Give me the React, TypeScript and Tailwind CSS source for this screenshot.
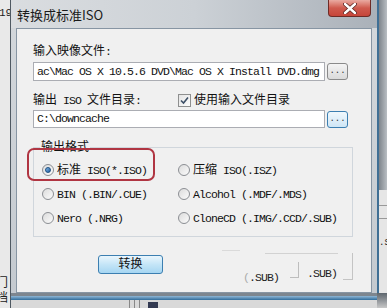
import React from 'react'

const mono = { fontFamily: '"Liberation Mono", "Noto Sans CJK SC", monospace' }

// splits a label into CJK runs and ASCII runs so each gets its own size
function Mixed({ text }: { text: string }) {
  const parts = text.split(/([\u4e00-\u9fff]+)/)
  return (
    <>
      {parts.map((p, i) =>
        /[\u4e00-\u9fff]/.test(p) ? (
          <span key={i} className="text-[12px] tracking-normal">{p}</span>
        ) : (
          <span key={i} className="text-[11.5px] tracking-[-0.9px]">{p}</span>
        )
      )}
    </>
  )
}

function Radio({ checked, label }: { checked?: boolean; label: string }) {
  return (
    <div className="flex h-[24px] items-center">
      <div className="flex h-[12px] w-[12px] items-center justify-center rounded-full border border-[#8b8e93] bg-gradient-to-br from-[#dcdcdc] to-[#fbfbfb]">
        {checked && (
          <div className="h-[6px] w-[6px] rounded-full border border-[#1d4f80] bg-gradient-to-br from-[#7fb6e8] to-[#1f5f9f]" />
        )}
      </div>
      <span className="ml-[3px] whitespace-nowrap text-[#111]">
        <Mixed text={label} />
      </span>
    </div>
  )
}

function DotsButton({ focused }: { focused?: boolean }) {
  return (
    <div
      className={
        focused
          ? 'ml-[2px] mt-[1px] flex h-[17px] w-[21px] items-center justify-center rounded-[3px] border border-[#3c7fb1] bg-gradient-to-b from-[#f0f8fd] to-[#cfe6f5] text-[9px] leading-none text-[#333]'
          : 'ml-[2px] mt-[1px] flex h-[17px] w-[21px] items-center justify-center rounded-[3px] border border-[#8a8a8a] bg-gradient-to-b from-[#f4f4f4] to-[#dadada] text-[9px] leading-none text-[#333]'
      }
    >
      ...
    </div>
  )
}

export default function App() {
  return (
    <div className="flex h-[308px] w-[387px] overflow-hidden bg-[#e4e4e4]" style={mono}>
      {/* desktop sliver on the left */}
      <div className="flex w-[10px] flex-col justify-between overflow-hidden bg-[#e9e9e9] text-[12px] leading-none text-[#222]">
        <div className="mt-[8px] -ml-[1px] text-[11px]">19</div>
        <div className="mb-[4px] flex flex-col" style={{ fontFamily: '"Noto Sans CJK SC", sans-serif' }}>
          <span className="-ml-[4px] h-[15px] leading-[15px]">门</span>
          <span className="-ml-[4px] h-[15px] leading-[15px]">档</span>
        </div>
      </div>

      {/* the dialog window */}
      <div className="flex w-[367px] flex-col border-l border-[#4f5962] bg-gradient-to-b from-[#d4d8dc] to-[#c3c9cf]">
        <div className="flex h-[28px] bg-gradient-to-r from-[#dadde0] via-[#ccd1d6] to-[#aab1b9]">
          <div
            className="ml-[6px] mt-[6px] text-[13px] leading-[18px] text-[#1a1a1a]"
            style={{ fontFamily: '"Noto Sans CJK SC", sans-serif' }}
          >
            转换成标准ISO
          </div>
          <div className="ml-auto mr-[6px] flex h-[17px] w-[43px] items-center justify-center rounded-b-[4px] border border-t-0 border-[#6e2b26] bg-gradient-to-b from-[#e9aaa2] via-[#cf5a4e] to-[#c6453a]">
            <svg width="14" height="11" viewBox="0 0 14 11">
              <path d="M2 1 L12 10 M12 1 L2 10" stroke="#5a2420" strokeWidth="4" strokeLinecap="round" />
              <path d="M2 1 L12 10 M12 1 L2 10" stroke="#fff" strokeWidth="2.4" strokeLinecap="round" />
            </svg>
          </div>
        </div>

        <div className="relative ml-[5px] h-[265px] w-[356px] border border-[#8795a3] bg-[#f0f0f0] pl-[16px] pt-[14px] text-[#111]">
          <div className="h-[17px] leading-[17px]">
            <Mixed text="输入映像文件:" />
          </div>
          <div className="mt-[2px] flex h-[19px]">
            <div className="flex w-[292px] items-center overflow-hidden border border-[#abadb3] bg-white pl-[3px] text-[11.5px] tracking-[-0.9px] whitespace-nowrap">
              ac\Mac OS X 10.5.6 DVD\Mac OS X Install DVD.dmg
            </div>
            <DotsButton />
          </div>

          <div className="mt-[10px] flex h-[18px] items-center">
            <div className="w-[145px] whitespace-nowrap">
              <Mixed text="输出 ISO 文件目录:" />
            </div>
            <div className="flex h-[13px] w-[13px] items-center justify-center border border-[#8e8f8f] bg-gradient-to-br from-[#e4e4e4] to-[#fcfcfc]">
              <svg width="9" height="9" viewBox="0 0 9 9">
                <path d="M1 4.5 L3.5 7 L8 1.5" stroke="#3c4f66" strokeWidth="1.6" fill="none" />
              </svg>
            </div>
            <span className="ml-[3px]">
              <Mixed text="使用输入文件目录" />
            </span>
          </div>
          <div className="mt-[1px] flex h-[18px]">
            <div className="flex w-[292px] items-center border border-[#abadb3] bg-white pl-[3px] text-[11.5px] tracking-[-0.9px]">
              C:\downcache
            </div>
            <DotsButton focused />
          </div>

          <div className="relative mt-[19px] h-[90px] w-[320px] border border-[#d0d6dc] pl-[8px] pt-[10px]">
            <div className="absolute -top-[9px] left-[6px] bg-[#f0f0f0] px-[1px] leading-[16px]">
              <Mixed text="输出格式" />
            </div>
            <div className="grid grid-cols-[136px_1fr]">
              <Radio checked label="标准 ISO(*.ISO)" />
              <Radio label="压缩 ISO(.ISZ)" />
              <Radio label="BIN (.BIN/.CUE)" />
              <Radio label="Alcohol (.MDF/.MDS)" />
              <Radio label="Nero (.NRG)" />
              <Radio label="CloneCD (.IMG/.CCD/.SUB)" />
            </div>
          </div>

          <div className="mt-[18px] flex">
            <div className="ml-[65px] flex h-[19px] w-[65px] items-center justify-center rounded-[3px] border border-[#3c7fb1] bg-gradient-to-b from-[#eaf6fd] via-[#c4e5f7] to-[#a6d6f2]">
              <Mixed text="转换" />
            </div>
          </div>

          {/* red highlight drawn over the screenshot */}
          <div className="absolute left-[10px] top-[119px] h-[33px] w-[128px] rounded-[7px] border-2 border-[#b03542]" />

          {/* leftover ghost of another dialog */}
          <div className="absolute left-[205px] top-[221px] h-px w-[18px] bg-[#dadada]" />
          <div className="absolute left-[248px] top-[224px] h-px w-[73px] bg-[#d2d2d2]" />
          <div className="absolute left-[335px] top-[224px] h-[27px] w-px bg-[#c4c4c4]" />
          <div className="absolute left-[326px] top-[250px] h-px w-[10px] bg-[#c4c4c4]" />
          <div className="absolute left-[281px] top-[233px] h-[16px] w-px bg-[#bdbdbd]" />
          <div className="absolute left-[273px] top-[248px] h-px w-[9px] bg-[#bdbdbd]" />
          <div className="absolute left-[226px] top-[236px] text-[#222]">
            <span className="text-[11.5px] tracking-[-0.9px] text-[#aaa]">(</span>
            <span className="text-[11.5px] tracking-[-0.9px]">.SUB)</span>
          </div>
          <div className="absolute left-[290px] top-[236px] text-[11.5px] tracking-[-0.9px] text-[#222]">.SUB)</div>
        </div>

        <div className="h-[3px] bg-[#7d868f]" />
        <div className="h-[4px] bg-gradient-to-b from-[#8fb7d6] to-[#2f6d9c]" />
        <div className="flex h-[8px] bg-[#d9d9d9]">
          <div className="ml-[118px] h-full w-px bg-[#888]" />
          <div className="ml-[4px] h-full w-px bg-[#888]" />
          <div className="ml-[4px] h-full w-px bg-[#888]" />
          <div className="ml-[8px] mt-[2px] h-[6px] w-[10px] bg-[#333a52]" />
        </div>
      </div>

      {/* neighbouring window on the right */}
      <div className="flex w-[10px] flex-col">
        <div className="h-[190px] border-l-2 border-[#3f6f95] bg-gradient-to-r from-[#7f868d] to-[#b9bec3]" />
        <div className="flex h-[103px] flex-col overflow-hidden border-l-2 border-[#3f6f95] bg-[#e6e6e6] text-[9px] leading-none text-[#222]">
          <div className="mt-[15px] h-px bg-[#999]" />
          <div className="mt-[12px] h-px bg-[#999]" />
          <div className="mt-[20px] whitespace-nowrap">.S</div>
        </div>
        <div className="h-[15px] bg-gradient-to-b from-[#5e666e] to-[#c8c8c8]" />
      </div>
    </div>
  )
}
